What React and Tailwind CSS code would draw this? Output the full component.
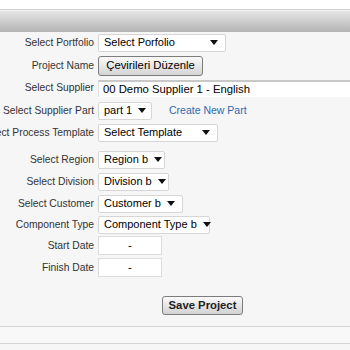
const arrow = (
  <svg width="8" height="5" viewBox="0 0 8 5" className="shrink-0">
    <path d="M0 0 H8 L4 5 Z" fill="#111" />
  </svg>
)

function Select({ value, width }) {
  return (
    <div
      className={`flex items-center justify-between gap-[6px] h-[18px] bg-white border border-[#d6d6d6] rounded-[2px] pl-[5px] pr-[7px] text-[11px] text-black ${width}`}
    >
      <span className="whitespace-nowrap">{value}</span>
      {arrow}
    </div>
  )
}

function Row({ label, children, className = '' }) {
  return (
    <div className={`flex items-center ${className}`}>
      <div className="w-[94px] shrink-0 flex justify-end text-[10.3px] text-[#333] whitespace-nowrap">
        <span>{label}</span>
      </div>
      <div className="pl-[4px] flex items-center min-w-0">{children}</div>
    </div>
  )
}

export default function App() {
  return (
    <div className="w-[350px] h-[350px] overflow-hidden bg-[#f6f6f6] font-['Liberation_Sans',Arial,sans-serif]">
      <div className="h-[9px] bg-white" />
      <div className="h-[1px] bg-[#cfcfcf]" />
      <div className="h-[1px] bg-[#f2f2f2]" />
      <div className="h-[21px] bg-gradient-to-b from-[#e6e6e6] to-[#b4b4b4]" />

      <div>
        <Row label="Select Portfolio" className="h-[19px] mt-[1px]">
          <Select value="Select Porfolio" width="w-[128px]" />
        </Row>
        <Row label="Project Name" className="h-[19px] mt-[4px]">
          <button className="h-[20px] w-[105px] border border-[#7c7c7c] rounded-[3px] bg-gradient-to-b from-[#fafafa] to-[#d4d4d4] text-[11.3px] text-black whitespace-nowrap">
            Çevirileri Düzenle
          </button>
        </Row>
        <Row label="Select Supplier" className="h-[18px] mt-[4px]">
          <div className="h-[17px] w-[260px] bg-white border-t-2 border-t-[#c8c8c8] border-l border-l-[#e0e0e0] pl-[4px] text-[11.3px] text-black whitespace-nowrap flex items-center">
            00 Demo Supplier 1 - English
          </div>
        </Row>
        <Row label="Select Supplier Part" className="h-[19px] mt-[4px]">
          <Select value="part 1" width="w-[54px]" />
          <a className="ml-[17px] text-[10.5px] text-[#2f68b0] whitespace-nowrap">Create New Part</a>
        </Row>
        <Row label="Select Process Template" className="h-[19px] mt-[3px]">
          <Select value="Select Template" width="w-[120px]" />
        </Row>

        <Row label="Select Region" className="h-[19px] mt-[8px]">
          <Select value="Region b" width="w-[67px]" />
        </Row>
        <Row label="Select Division" className="h-[19px] mt-[3px]">
          <Select value="Division b" width="w-[71px]" />
        </Row>
        <Row label="Select Customer" className="h-[19px] mt-[3px]">
          <Select value="Customer b" width="w-[85px]" />
        </Row>
        <Row label="Component Type" className="h-[19px] mt-[2px]">
          <Select value="Component Type b" width="w-[112px]" />
        </Row>
        <Row label="Start Date" className="h-[19px] mt-[2px]">
          <div className="h-[19px] w-[64px] bg-white border border-[#dcdcdc] text-[11.3px] flex items-center justify-center">-</div>
        </Row>
        <Row label="Finish Date" className="h-[19px] mt-[3px]">
          <div className="h-[19px] w-[64px] bg-white border border-[#dcdcdc] text-[11.3px] flex items-center justify-center">-</div>
        </Row>

        <div className="flex mt-[19px] pl-[162px]">
          <button className="h-[19px] w-[81px] border border-[#7c7c7c] rounded-[3px] bg-gradient-to-b from-[#fafafa] to-[#d2d2d2] text-[11.3px] font-bold text-[#222] whitespace-nowrap">
            Save Project
          </button>
        </div>
      </div>

      <div className="mt-[11px] h-[1px] bg-[#d4d4d4]" />
      <div className="h-[16px] bg-[#f8f8f8]" />
      <div className="h-[1px] bg-[#d4d4d4]" />
    </div>
  )
}
